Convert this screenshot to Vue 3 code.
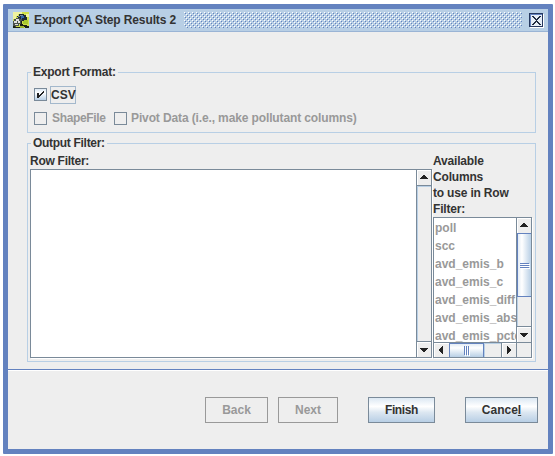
<script setup>
import { ref } from 'vue'

const filter = ref('')
const heading = ['Available', 'Columns', 'to use in Row', 'Filter:']
const columns = ['poll', 'scc', 'avd_emis_b', 'avd_emis_c', 'avd_emis_diff', 'avd_emis_abs', 'avd_emis_pctdiff']
</script>

<template>
  <div class="dialog">
    <header class="titlebar">
      <svg class="app-icon" width="16" height="16" viewBox="0 0 16 16" shape-rendering="crispEdges">
        <rect width="16" height="16" fill="#cfe04a" />
        <path d="M0 0h9v2H5v2H3v3H0zM13 2h3v3h-3z" fill="#eff3a0" />
        <path d="M10 8h5v4h-5z" fill="#a9c92e" />
        <path d="M6 2h5v1h2v2h1v3h-3v1H9V8H7V6H5V5H4V4h2z" fill="#1d2a35" />
        <path d="M7 3h3v1H7zM5 4h2v1H5z" fill="#73869a" />
        <path d="M8 4h3v2H9v1H8z" fill="#2f68ad" />
        <path d="M3 6h4v1h2v2H8v3H6v2H3v1H1v-1H0V9h1V7h2z" fill="#49504c" />
        <path d="M3 7h3v2H3zM1 9h3v2H1zM5 9h2v2H5zM2 12h3v1H2z" fill="#dfe2df" />
        <path d="M0 14h2v1h5v1H0zM8 9h1v3h1v1h4v1h2v2h-4v-1H9v-1H7v-2h1z" fill="#1b2114" />
        <path d="M7 14h4v2H7z" fill="#9db531" />
      </svg>
      <span class="title">Export QA Step Results 2</span>
      <svg class="bumps" width="338" height="16" shape-rendering="crispEdges">
        <defs>
          <pattern id="bump" width="4" height="4" patternUnits="userSpaceOnUse">
            <path d="M0 0h1v1H0zM2 2h1v1H2z" fill="#fff" />
            <path d="M1 1h1v1H1zM3 3h1v1H3z" fill="#6382bf" />
          </pattern>
        </defs>
        <rect width="338" height="16" fill="url(#bump)" />
      </svg>
      <svg class="close" width="15" height="15" viewBox="0 0 15 15" shape-rendering="crispEdges">
        <path d="M1 1h14v14H1z" fill="#fff" />
        <path d="M0 0h14v14H0z" fill="#26385f" />
        <path d="M1 1h12v12H1z" fill="#6382bf" />
        <path d="M2 2h11v11H2z" fill="#e6eef7" />
        <path d="M3 3h2v1h1v1h1v1h1V5h1V4h1V3h2v1h-1v1h-1v1H9v1H8v1h1v1h1v1h1v1h1v1h-2v-1H9v-1H8V9H7v1H6v1H5v1H3v-1h1v-1h1V9h1V8h1V7H6V6H5V5H4V4H3z" fill="#202b40" />
      </svg>
    </header>

    <main class="content">
      <section class="group format">
        <div class="legend"><span class="export-label">Export Format:</span></div>
        <div class="check-row first">
          <svg class="box" width="13" height="13" viewBox="0 0 13 13" shape-rendering="crispEdges">
            <defs><linearGradient id="checkFill" x2="0" y2="1"><stop stop-color="#dce8f3" /><stop offset=".35" stop-color="#fff" /><stop offset="1" stop-color="#b8cfe5" /></linearGradient></defs>
            <rect width="13" height="13" fill="#7a8a99" />
            <rect x="1" y="1" width="11" height="11" fill="url(#checkFill)" />
            <path d="M3 5h2v2h1V6h1V5h1V4h1V3h1v2H9v1H8v1H7v1H6v1H5v1H3z" fill="#222" />
          </svg>
          <span class="focused">CSV</span>
        </div>
        <div class="check-row disabled">
          <i class="box empty"></i><span class="shape">ShapeFile</span>
          <i class="box empty second"></i><span class="pivot">Pivot Data (i.e., make pollutant columns)</span>
        </div>
      </section>

      <section class="group output">
        <div class="legend"><span class="output-label">Output Filter:</span></div>
        <div class="filter-body">
          <div class="row-filter">
            <label for="filter">Row Filter:</label>
            <div class="pane editor">
              <textarea id="filter" v-model="filter"></textarea>
              <div class="vbar">
                <div class="arrow-button"><svg width="8" height="4" shape-rendering="crispEdges"><path d="M3 0h2v1h1v1h1v1h1v1H0V3h1V2h1V1h1z" /></svg></div>
                <div class="track"></div>
                <div class="arrow-button down"><svg width="8" height="4" shape-rendering="crispEdges"><path d="M0 0h8v1H7v1H6v1H5v1H3V3H2V2H1V1H0z" /></svg></div>
              </div>
            </div>
          </div>
          <div class="available">
            <div class="heading"><div v-for="line in heading" :key="line">{{ line }}</div></div>
            <div class="pane list-pane">
              <div class="list-main">
                <div class="list"><div v-for="column in columns" :key="column">{{ column }}</div></div>
                <div class="vbar">
                  <div class="arrow-button"><svg width="8" height="4" shape-rendering="crispEdges"><path d="M3 0h2v1h1v1h1v1h1v1H0V3h1V2h1V1h1z" /></svg></div>
                  <div class="track"><div class="thumb vertical"><i></i><i></i><i></i></div></div>
                  <div class="arrow-button down"><svg width="8" height="4" shape-rendering="crispEdges"><path d="M0 0h8v1H7v1H6v1H5v1H3V3H2V2H1V1H0z" /></svg></div>
                </div>
              </div>
              <div class="hbar">
                <div class="h-button"><svg width="4" height="8" shape-rendering="crispEdges"><path d="M4 0v8H3V7H2V6H1V5H0V3h1V2h1V1h1V0z" /></svg></div>
                <div class="thumb horizontal"><i></i><i></i><i></i></div>
                <div class="h-track"></div>
                <div class="h-button right"><svg width="4" height="8" shape-rendering="crispEdges"><path d="M0 0v8h1V7h1V6h1V5h1V3H3V2H2V1H1V0z" /></svg></div>
                <div class="corner"></div>
              </div>
            </div>
          </div>
        </div>
      </section>
    </main>

    <footer>
      <button class="back" disabled>Back</button>
      <button class="next" disabled>Next</button>
      <button class="finish">Finish</button>
      <button class="cancel">Cance<span>l</span></button>
    </footer>
  </div>
</template>

<style>
body { margin: 0; background: #fff; }
</style>

<style scoped>
* { box-sizing: border-box; }
.dialog { width: 550px; height: 450px; margin: 4px 0 0 3px; border: 5px solid #6382bf; border-radius: 1px; background: #eee; color: #333; font: bold 12px/16px "Liberation Sans", Arial, sans-serif; white-space: nowrap; display: flex; flex-direction: column; }
.titlebar { height: 23px; flex: none; display: flex; align-items: flex-start; background: #b8cfe5; border-bottom: 1px solid #9ab4d5; padding: 3px 4px 0 5px; }
.app-icon { flex: none; }
.title { width: 150px; flex: none; margin-left: 5px; line-height: 17px; letter-spacing: -.12px; }
.bumps { flex: none; }
.close { flex: none; margin: 1px 0 0 7px; }
.content { height: 337px; flex: none; padding: 35px 12px 0 19px; }
.group { border: 1px solid #b8cfe5; }
.legend { height: 16px; margin-top: -9px; margin-left: 3px; }
.legend span { display: inline-block; background: #eee; padding: 0 2px; letter-spacing: -.24px; }
.legend .output-label { letter-spacing: -.3px; }
.format { height: 61px; margin-top: 5px; }
.check-row { display: flex; align-items: center; height: 18px; padding-left: 6px; }
.first { margin-top: 5px; height: 19px; }
.box { display: block; flex: none; width: 13px; height: 13px; }
.empty { border: 1px solid #7a8a99; }
.focused { border: 1px solid #a3b8cc; height: 18px; width: 26px; margin-left: 3px; line-height: 17px; }
.disabled { margin-top: 5px; color: #999; }
.shape { margin-left: 5px; width: 55px; letter-spacing: -.35px; }
.second { margin-left: 7px; }
.pivot { margin-left: 4px; letter-spacing: -.125px; }
.output { height: 219px; margin-top: 10px; }
.filter-body { display: flex; gap: 1px; margin: 2px 0 0 2px; }
.row-filter { width: 402px; }
.row-filter label { display: block; height: 16px; letter-spacing: -.27px; }
.pane { border: 1px solid #7a8a99; box-shadow: 1px 1px #fff; background: #fff; }
.editor { height: 189px; display: flex; }
textarea { flex: 1; min-width: 0; border: 0; padding: 0; outline: 0; resize: none; background: #fff; font: inherit; }
.vbar { width: 15px; border-left: 1px solid #7a8a99; display: flex; flex-direction: column; background: #eee; flex: none; }
.arrow-button { height: 16px; flex: none; display: flex; align-items: flex-start; justify-content: center; padding-top: 5px; border-bottom: 1px solid #7a8a99; box-shadow: inset 1px 1px #fff; }
.arrow-button.down { border-bottom: 0; border-top: 1px solid #7a8a99; padding-top: 6px; }
.arrow-button svg, .h-button svg { fill: #222; }
.track { flex: 1; box-shadow: inset 1px 1px #b8cfe5; }
.available { width: 99px; }
.heading { height: 64px; letter-spacing: -.18px; }
.list-pane { height: 141px; }
.list-main { display: flex; height: 124px; }
.list { flex: 1; min-width: 0; overflow: hidden; padding: 1px 0 0 1px; color: #999; line-height: 18px; }
.thumb { display: flex; align-items: center; justify-content: center; }
.vertical { height: 64px; margin-top: -1px; flex-direction: column; gap: 1px; border: solid #6382bf; border-width: 1px 0; background: linear-gradient(90deg, #dce7f2, #fff 35%, #b8cfe5); box-shadow: inset 1px 0 #6382bf; }
.vertical i { width: 9px; height: 1px; background: #6382bf; box-shadow: 1px 1px #fff; }
.hbar { height: 15px; display: flex; background: #eee; border-top: 1px solid #7a8a99; }
.h-button { width: 16px; display: flex; align-items: flex-start; padding: 3px 0 0 5px; border-right: 1px solid #7a8a99; box-shadow: inset 1px 1px #fff; }
.horizontal { width: 35px; margin-left: -1px; padding-right: 1px; gap: 1px; border: solid #6382bf; border-width: 0 1px; background: linear-gradient(#dce7f2, #fff 35%, #b8cfe5); box-shadow: inset 0 1px #6382bf; }
.horizontal i { height: 9px; width: 1px; background: #6382bf; box-shadow: 1px 1px #fff; }
.h-track { width: 17px; box-shadow: inset 1px 1px #b8cfe5; }
.right { border-left: 1px solid #7a8a99; }
.corner { flex: 1; }
footer { flex: 1; border-top: 1px solid #6382bf; box-shadow: inset 0 1px #fff; display: flex; align-items: flex-start; padding: 27px 10px 0 197px; }
button { font: inherit; color: #333; height: 26px; padding: 0 0 0; border: 1px solid #7a8a99; border-radius: 0; background: linear-gradient(#dce8f3, #fff 35%, #dce7f1 60%, #b8cfe5); }
button:disabled { color: #999; border-color: #999; background: #eee; }
.back { width: 63px; }
.next { width: 60px; margin-left: 10px; }
.finish { width: 67px; margin-left: 30px; letter-spacing: -.36px; }
.cancel { width: 73px; margin-left: 30px; }
.cancel span { text-decoration: underline; }
</style>
